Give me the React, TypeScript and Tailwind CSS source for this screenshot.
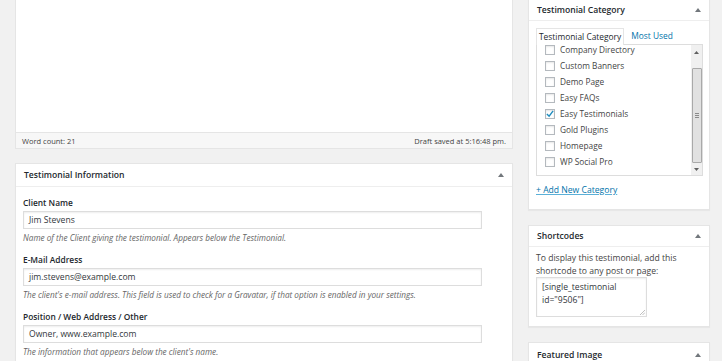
import { ReactNode } from 'react';

const categories = [
  { name: 'Company Directory', checked: false },
  { name: 'Custom Banners', checked: false },
  { name: 'Demo Page', checked: false },
  { name: 'Easy FAQs', checked: false },
  { name: 'Easy Testimonials', checked: true },
  { name: 'Gold Plugins', checked: false },
  { name: 'Homepage', checked: false },
  { name: 'WP Social Pro', checked: false },
];

const fields = [
  {
    label: 'Client Name',
    value: 'Jim Stevens',
    help: 'Name of the Client giving the testimonial. Appears below the Testimonial.',
  },
  {
    label: 'E-Mail Address',
    value: 'jim.stevens@example.com',
    help: "The client's e-mail address. This field is used to check for a Gravatar, if that option is enabled in your settings.",
  },
  {
    label: 'Position / Web Address / Other',
    value: 'Owner, www.example.com',
    help: "The information that appears below the client's name.",
  },
];

const Caret = () => (
  <svg width="6" height="4" viewBox="0 0 6 4" className="shrink-0">
    <path d="M0 4 L3 0 L6 4 Z" fill="#72777c" />
  </svg>
);

const BoxHeader = ({ title, className = '' }: { title: string; className?: string }) => (
  <div className={`flex items-center justify-between border-b border-[#eeeeee] pl-[8px] pr-[8px] ${className}`}>
    <h2 className="text-[8.6px] font-semibold text-[#23282d]">{title}</h2>
    <Caret />
  </div>
);

const Box = ({ children, className = '' }: { children: ReactNode; className?: string }) => (
  <div className={`border border-[#e5e5e5] bg-white shadow-[0_1px_1px_rgba(0,0,0,0.04)] ${className}`}>{children}</div>
);

const Checkbox = ({ checked }: { checked: boolean }) => (
  <span className="flex h-[10px] w-[10px] shrink-0 items-center justify-center border border-[#b4b9be] bg-white shadow-[inset_0_1px_2px_rgba(0,0,0,0.1)]">
    {checked && (
      <svg width="9" height="8" viewBox="0 0 9 8">
        <path d="M1 4 L3.5 6.5 L8 0.5" stroke="#1e8cbe" strokeWidth="1.6" fill="none" />
      </svg>
    )}
  </span>
);

export default function App() {
  return (
    <div
      className="flex h-[361px] w-[722px] gap-[15px] overflow-hidden bg-[#f1f1f1] pl-[15px] text-[8.5px] leading-[12px] text-[#23282d]"
      style={{ fontFamily: '"Open Sans", "Noto Sans", sans-serif' }}
    >
      {/* main column */}
      <div className="flex w-[498px] shrink-0 flex-col gap-[14px]">
        <div className="-mt-px border border-[#e5e5e5] bg-white">
          <div className="h-[132px]" />
          <div className="flex h-[16px] items-center justify-between border-t border-[#e5e5e5] bg-[#f7f7f7] px-[6px] text-[7.5px] text-[#444]">
            <span>Word count: 21</span>
            <span>Draft saved at 5:16:48 pm.</span>
          </div>
        </div>

        <Box>
          <BoxHeader title="Testimonial Information" className="h-[23px]" />
          <div className="px-[7px] pt-[10px]">
            {fields.map((f) => (
              <div key={f.label} className="mb-[10px]">
                <div className="text-[8.4px] font-semibold leading-[12px]">{f.label}</div>
                <div className="mt-[2px] flex h-[18px] w-[459px] items-center border border-[#dddddd] px-[5px] text-[8.6px] text-[#32373c] shadow-[inset_0_1px_2px_rgba(0,0,0,0.07)]">
                  {f.value}
                </div>
                <p className="mt-[3px] text-[8.2px] italic leading-[12px] text-[#666]">{f.help}</p>
              </div>
            ))}
          </div>
        </Box>
      </div>

      {/* sidebar */}
      <div className="flex w-[182px] shrink-0 flex-col">
        <Box className="-mt-px">
          <BoxHeader title="Testimonial Category" className="h-[21px]" />
          <div className="px-[7px] pt-[6px] pb-[13px]">
            <div className="flex items-end text-[8.4px]">
              <span className="relative z-10 -mb-px flex h-[17px] items-center border border-b-0 border-[#e5e5e5] bg-white px-[2px] text-[#23282d]">
                Testimonial Category
              </span>
              <span className="ml-[7px] flex h-[17px] items-center text-[#0073aa]">Most Used</span>
            </div>
            <div className="flex h-[132px] w-[167px] border border-[#dddddd] bg-white">
              <div className="flex-1 overflow-hidden pl-[8px]">
                <ul className="mt-[-3px]">
                  {categories.map((c) => (
                    <li key={c.name} className="flex h-[16px] items-center gap-[5px] text-[8.3px] text-[#444]">
                      <Checkbox checked={c.checked} />
                      <span>{c.name}</span>
                    </li>
                  ))}
                </ul>
              </div>
              <div className="flex w-[11px] flex-col items-center bg-[#f0f0f0]">
                <div className="flex h-[14px] items-center">
                  <svg width="5" height="3" viewBox="0 0 5 3">
                    <path d="M0 3 L2.5 0 L5 3 Z" fill="#606060" />
                  </svg>
                </div>
                <div className="mt-[9px] flex h-[95px] w-[10px] items-center justify-center rounded-[1px] border border-[#a9a9a9] bg-[#e1e1e1]">
                  <div className="flex flex-col gap-[1px]">
                    <div className="h-px w-[4px] bg-[#8a8a8a]" />
                    <div className="h-px w-[4px] bg-[#8a8a8a]" />
                    <div className="h-px w-[4px] bg-[#8a8a8a]" />
                  </div>
                </div>
                <div className="flex flex-1 items-center">
                  <svg width="5" height="3" viewBox="0 0 5 3">
                    <path d="M0 0 L2.5 3 L5 0 Z" fill="#606060" />
                  </svg>
                </div>
              </div>
            </div>
            <a className="mt-[8px] block w-fit text-[8.6px] leading-[12px] text-[#0073aa] underline decoration-[#5bb0d8]">
              + Add New Category
            </a>
          </div>
        </Box>

        <Box className="mt-[15px]">
          <BoxHeader title="Shortcodes" className="h-[21px]" />
          <div className="px-[7px] pt-[5px] pb-[9px]">
            <p className="text-[8.6px] leading-[12.5px] text-[#444]">
              To display this testimonial, add this shortcode to any post or page:
            </p>
            <div className="relative h-[40px] w-[111px] border border-[#dddddd] px-[5px] pt-[3px] text-[8.6px] leading-[13px] text-[#32373c] shadow-[inset_0_1px_2px_rgba(0,0,0,0.07)]">
              [single_testimonial id="9506"]
              <svg width="5" height="5" viewBox="0 0 5 5" className="absolute right-[1px] bottom-[1px]">
                <path d="M0 5 L5 0 M2.5 5 L5 2.5" stroke="#b0b0b0" strokeWidth="0.8" />
              </svg>
            </div>
          </div>
        </Box>

        <Box className="mt-[15px]">
          <BoxHeader title="Featured Image" className="h-[24px]" />
          <div className="h-[40px]" />
        </Box>
      </div>
    </div>
  );
}
